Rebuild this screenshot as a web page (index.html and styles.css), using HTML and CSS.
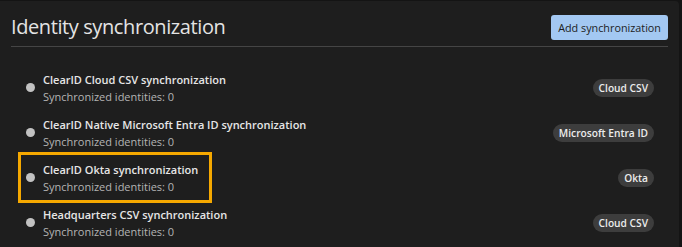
FILE: index.html
```html
<!DOCTYPE html>
<html lang="en">
<head>
    <meta charset="UTF-8">
    <meta name="viewport" content="width=device-width, initial-scale=1.0">
    <title>Identity synchronization</title>
    <link rel="stylesheet" href="styles.css">
</head>
<body>
    <section class="panel">
        <header class="panel-header">
            <h1 class="panel-title">Identity synchronization</h1>
            <button class="add-button">Add synchronization</button>
        </header>

        <ul class="sync-list">
            <li class="sync-row">
                <span class="status-dot"></span>
                <div class="sync-text">
                    <div class="sync-name">ClearID Cloud CSV synchronization</div>
                    <div class="sync-count">Synchronized identities: 0</div>
                </div>
                <span class="sync-badge">Cloud CSV</span>
            </li>
            <li class="sync-row">
                <span class="status-dot"></span>
                <div class="sync-text">
                    <div class="sync-name">ClearID Native Microsoft Entra ID synchronization</div>
                    <div class="sync-count">Synchronized identities: 0</div>
                </div>
                <span class="sync-badge">Microsoft Entra ID</span>
            </li>
            <li class="sync-row">
                <!-- annotation box drawn over the row -->
                <span class="highlight"></span>
                <span class="status-dot"></span>
                <div class="sync-text">
                    <div class="sync-name">ClearID Okta synchronization</div>
                    <div class="sync-count">Synchronized identities: 0</div>
                </div>
                <span class="sync-badge">Okta</span>
            </li>
            <li class="sync-row">
                <span class="status-dot"></span>
                <div class="sync-text">
                    <div class="sync-name">Headquarters CSV synchronization</div>
                    <div class="sync-count">Synchronized identities: 0</div>
                </div>
                <span class="sync-badge">Cloud CSV</span>
            </li>
        </ul>
    </section>
</body>
</html>
```

FILE: styles.css
```css
:root {
    --page-bg: #141414;
    --panel-bg: #1e1e1e;
    --text-main: #e6e6e6;
    --text-muted: #b4b4b4;
    --divider: #454545;
    --accent: #a3c8f2;
    --badge-bg: #3d3d3d;
    --highlight: #f5a800;
}

html, body {
    margin: 0;
    padding: 0;
    background-color: var(--page-bg);
}

body {
    font-family: 'Open Sans', 'Noto Sans', sans-serif;
    color: var(--text-main);
    width: 682px;
    height: 247px;
    overflow: hidden;
}

.panel {
    background-color: var(--panel-bg);
    margin: 1px 3px 0 0;
    height: 246px;
    border-radius: 0 4px 0 0;
}

.panel-header {
    display: flex;
    align-items: center;
    justify-content: space-between;
    margin: 0 11px;
    padding: 13px 0 6px;
    border-bottom: 1px solid var(--divider);
}

.panel-title {
    margin: 0;
    font-size: 20px;
    font-weight: 400;
    letter-spacing: -0.4px;
    line-height: 26px;
    color: #e4e4e4;
}

.add-button {
    background-color: var(--accent);
    color: #1c1c1c;
    border: none;
    border-radius: 3px;
    font-family: inherit;
    font-size: 10.8px;
    height: 25px;
    padding: 0 7px;
}

.sync-list {
    list-style: none;
    margin: 0;
    padding: 18px 25px 0 26px;
}

.sync-row {
    position: relative;
    display: flex;
    align-items: center;
    height: 45px;
}

.status-dot {
    width: 9px;
    height: 9px;
    border-radius: 50%;
    background-color: #c2c2c2;
    margin-right: 8px;
    flex-shrink: 0;
}

.sync-text {
    flex: 1;
    line-height: 17px;
}

.sync-name {
    font-size: 11px;
    font-weight: 600;
    color: var(--text-main);
}

.sync-count {
    font-size: 11px;
    color: var(--text-muted);
}

.sync-badge {
    background-color: var(--badge-bg);
    color: #ececec;
    font-size: 10.2px;
    font-weight: 600;
    line-height: 18px;
    padding: 0 6px;
    border-radius: 9px;
}

.highlight {
    position: absolute;
    left: -8px;
    top: -3px;
    width: 188px;
    height: 45px;
    border: 3px solid var(--highlight);
}
```
